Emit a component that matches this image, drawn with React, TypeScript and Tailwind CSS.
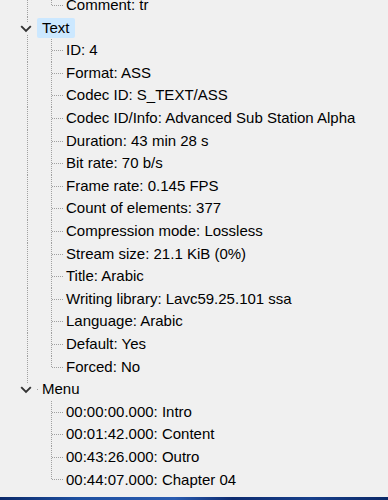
import React from "react";

const ROW = "h-[22.6px]";
const LINE = "#a0a0a0";

function Connector({ outer, inner }: { outer: "full" | "none"; inner: "full" | "half" }) {
  return (
    <svg width="64" height="100%" className="shrink-0 block" shapeRendering="crispEdges">
      {outer === "full" && (
        <line x1="27.5" y1="0" x2="27.5" y2="100%" stroke={LINE} strokeWidth="1" strokeDasharray="1 1" />
      )}
      <line x1="51.5" y1="0" x2="51.5" y2={inner === "full" ? "100%" : "50%"} stroke={LINE} strokeWidth="1" strokeDasharray="1 1" />
      <line x1="52" y1="50%" x2="63" y2="50%" stroke={LINE} strokeWidth="1" strokeDasharray="1 1" transform="translate(0,0.5)" />
    </svg>
  );
}

function ChildRow({ text, outer, last }: { text: string; outer: "full" | "none"; last?: boolean }) {
  return (
    <div className={`flex items-center ${ROW}`}>
      <Connector outer={outer} inner={last ? "half" : "full"} />
      <span className="pl-[2px] whitespace-nowrap">{text}</span>
    </div>
  );
}

function Chevron() {
  return (
    <g>
      <rect x="19" y="-6" width="14" height="12" fill="#f0f0f0" shapeRendering="crispEdges" />
      <path d="M21.2 -2.2 L26 2.6 L30.8 -2.2" fill="none" stroke="#333333" strokeWidth="1.9" shapeRendering="geometricPrecision" />
    </g>
  );
}

function NodeRow({ label, outer, selected }: { label: string; outer: "full" | "half"; selected?: boolean }) {
  return (
    <div className={`flex items-center ${ROW}`}>
      <svg width="38" height="100%" className="shrink-0 block overflow-visible" shapeRendering="crispEdges">
        <line x1="27.5" y1="0" x2="27.5" y2={outer === "full" ? "100%" : "50%"} stroke={LINE} strokeWidth="1" strokeDasharray="1 1" />
        {!selected && <rect x="37" y="50%" width="1" height="1" fill={LINE} />}
        <svg x="0" y="50%" overflow="visible">
          <Chevron />
        </svg>
      </svg>
      {selected ? (
        <span className="ml-[-1px] pl-[5px] pr-[5px] h-[20px] flex items-center rounded-[2px] bg-[#cce8ff]">{label}</span>
      ) : (
        <span className="pl-[4px]">{label}</span>
      )}
    </div>
  );
}

const textItems = [
  "ID: 4",
  "Format: ASS",
  "Codec ID: S_TEXT/ASS",
  "Codec ID/Info: Advanced Sub Station Alpha",
  "Duration: 43 min 28 s",
  "Bit rate: 70 b/s",
  "Frame rate: 0.145 FPS",
  "Count of elements: 377",
  "Compression mode: Lossless",
  "Stream size: 21.1 KiB (0%)",
  "Title: Arabic",
  "Writing library: Lavc59.25.101 ssa",
  "Language: Arabic",
  "Default: Yes",
  "Forced: No",
];

const menuItems = [
  "00:00:00.000: Intro",
  "00:01:42.000: Content",
  "00:43:26.000: Outro",
  "00:44:07.000: Chapter 04",
];

export default function App() {
  return (
    <div
      className="w-[388px] h-[500px] overflow-hidden flex flex-col bg-[#f0f0f0] text-[15px] text-[#000000]"
      style={{ fontFamily: '"Liberation Sans", Arial, sans-serif' }}
    >
      <div className="flex-1 flex flex-col mt-[-6px]">
        <ChildRow text="Comment: tr" outer="full" last />
        <NodeRow label="Text" outer="full" selected />
        {textItems.map((t, i) => (
          <ChildRow key={t} text={t} outer="full" last={i === textItems.length - 1} />
        ))}
        <NodeRow label="Menu" outer="half" />
        {menuItems.map((t, i) => (
          <ChildRow key={t} text={t} outer="none" last={i === menuItems.length - 1} />
        ))}
      </div>
      <div className="h-[3px] shrink-0 bg-[linear-gradient(90deg,#0c2a6a_0%,#1d4fa0_20%,#2a5cb0_45%,#0e2c70_60%,#173f8a_80%,#0b2866_100%)]" />
    </div>
  );
}
